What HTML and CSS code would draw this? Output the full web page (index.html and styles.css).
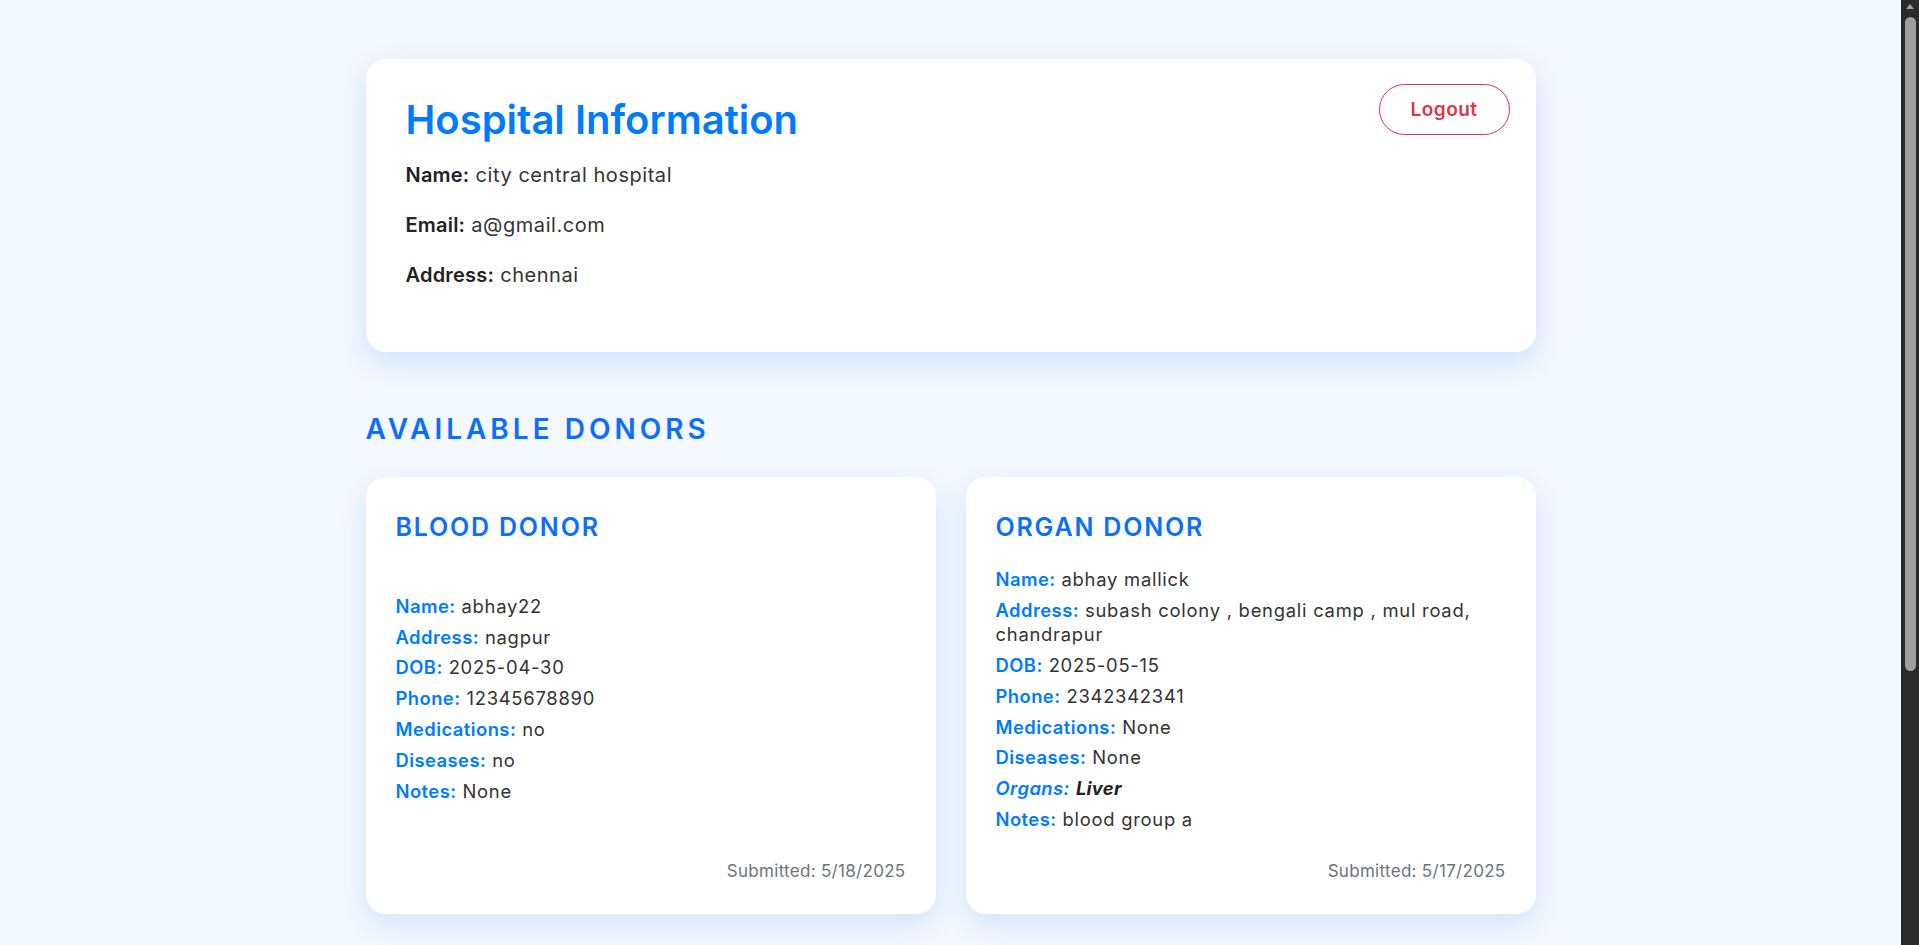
FILE: index.html
```html
<!DOCTYPE html>
<html lang="en">
<head>
<meta charset="utf-8">
<title>Hospital Dashboard</title>
<link rel="stylesheet" href="styles.css">
</head>
<body>
<main class="dashboard">
  <section class="hospital-card">
    <button class="logout-btn" type="button">Logout</button>
    <h1 class="hospital-title">Hospital Information</h1>
    <p class="info-row"><strong>Name:</strong> city central hospital</p>
    <p class="info-row"><strong>Email:</strong> a@gmail.com</p>
    <p class="info-row"><strong>Address:</strong> chennai</p>
  </section>

  <h2 class="section-title">AVAILABLE DONORS</h2>

  <div class="donor-grid">
    <article class="donor-card">
      <h3 class="donor-type">BLOOD DONOR</h3>
      <div class="field-gap"></div>
      <p class="field"><span class="label">Name:</span> abhay22</p>
      <p class="field"><span class="label">Address:</span> nagpur</p>
      <p class="field"><span class="label">DOB:</span> 2025-04-30</p>
      <p class="field"><span class="label">Phone:</span> 12345678890</p>
      <p class="field"><span class="label">Medications:</span> no</p>
      <p class="field"><span class="label">Diseases:</span> no</p>
      <p class="field"><span class="label">Notes:</span> None</p>
      <p class="submitted">Submitted: 5/18/2025</p>
    </article>

    <article class="donor-card">
      <h3 class="donor-type">ORGAN DONOR</h3>
      <p class="field"><span class="label">Name:</span> abhay mallick</p>
      <p class="field"><span class="label">Address:</span> subash colony , bengali camp , mul road, chandrapur</p>
      <p class="field"><span class="label">DOB:</span> 2025-05-15</p>
      <p class="field"><span class="label">Phone:</span> 2342342341</p>
      <p class="field"><span class="label">Medications:</span> None</p>
      <p class="field"><span class="label">Diseases:</span> None</p>
      <p class="field field-organs"><span class="label">Organs:</span> <strong>Liver</strong></p>
      <p class="field"><span class="label">Notes:</span> blood group a</p>
      <p class="submitted">Submitted: 5/17/2025</p>
    </article>
  </div>
</main>

<div class="scrollbar" aria-hidden="true">
  <span class="scroll-arrow"></span>
  <span class="scroll-thumb"></span>
</div>
</body>
</html>
```

FILE: styles.css
```css
html {
  background: #f4f8ff;
}

body {
  margin: 0;
  padding-right: 18px;
  background: #f4f8ff;
  color: #333333;
  font-family: Inter, "Open Sans", sans-serif;
}

.dashboard {
  width: 1170px;
  margin: 0 auto;
  padding: 59px 0 418px;
}

/* Hospital information */
.hospital-card {
  position: relative;
  background: #ffffff;
  border-radius: 20px;
  padding: 38px 40px 63px;
  box-shadow: 0 10px 28px rgba(0, 110, 240, 0.16);
}

.hospital-title {
  margin: 0 0 19px;
  font-size: 40px;
  line-height: 46px;
  font-weight: 600;
  color: #007bff;
}

.info-row {
  margin: 0 0 23px;
  font-size: 20px;
  line-height: 27px;
  letter-spacing: 0.55px;
  color: #333333;
}

.info-row:last-child {
  margin-bottom: 0;
}

.info-row strong {
  font-weight: 600;
  letter-spacing: 0.2px;
  color: #222222;
}

.logout-btn {
  position: absolute;
  top: 25px;
  right: 26px;
  width: 131px;
  height: 51px;
  border: 1px solid #dc3545;
  border-radius: 26px;
  background: #ffffff;
  color: #dc3545;
  font-family: inherit;
  font-size: 19px;
  font-weight: 600;
  letter-spacing: 0.5px;
}

/* Donors */
.section-title {
  margin: 60px 0 31px;
  font-size: 28px;
  line-height: 34px;
  font-weight: 600;
  letter-spacing: 4px;
  color: #0d6efd;
}

.donor-grid {
  display: grid;
  grid-template-columns: 1fr 1fr;
  gap: 30px;
}

.donor-card {
  display: flex;
  flex-direction: column;
  background: #ffffff;
  border-radius: 20px;
  padding: 35px 30px 31px;
  box-shadow: 0 10px 28px rgba(0, 110, 240, 0.14);
}

.donor-type {
  margin: 0 0 25px;
  font-size: 25px;
  line-height: 30px;
  font-weight: 600;
  letter-spacing: 1.8px;
  color: #0d6efd;
}

.field-gap {
  height: 26.8px;
  flex: none;
}

.field {
  margin: 0 0 6.3px;
  font-size: 18.4px;
  line-height: 24.5px;
  letter-spacing: 0.75px;
  color: #333333;
}

.label {
  font-weight: 600;
  letter-spacing: 0.45px;
  color: #007bff;
}

.field-organs {
  font-style: italic;
}

.field-organs strong {
  font-weight: 700;
  letter-spacing: 0.3px;
  color: #222222;
}

.submitted {
  margin: auto 0 0;
  padding-top: 21px;
  text-align: right;
  font-size: 17px;
  line-height: 24px;
  letter-spacing: 0.3px;
  color: #6c757d;
}

/* Browser scrollbar as seen in the capture */
.scrollbar {
  position: fixed;
  top: 0;
  right: 0;
  width: 18px;
  height: 100vh;
  background: #2b2b2b;
}

.scroll-arrow {
  position: absolute;
  top: 4px;
  left: 5px;
  width: 0;
  height: 0;
  border-left: 4px solid transparent;
  border-right: 4px solid transparent;
  border-bottom: 5px solid #a3a3a3;
}

.scroll-thumb {
  position: absolute;
  top: 17px;
  left: 4px;
  width: 11px;
  height: 654px;
  border-radius: 6px;
  background: #9f9f9f;
}
```
